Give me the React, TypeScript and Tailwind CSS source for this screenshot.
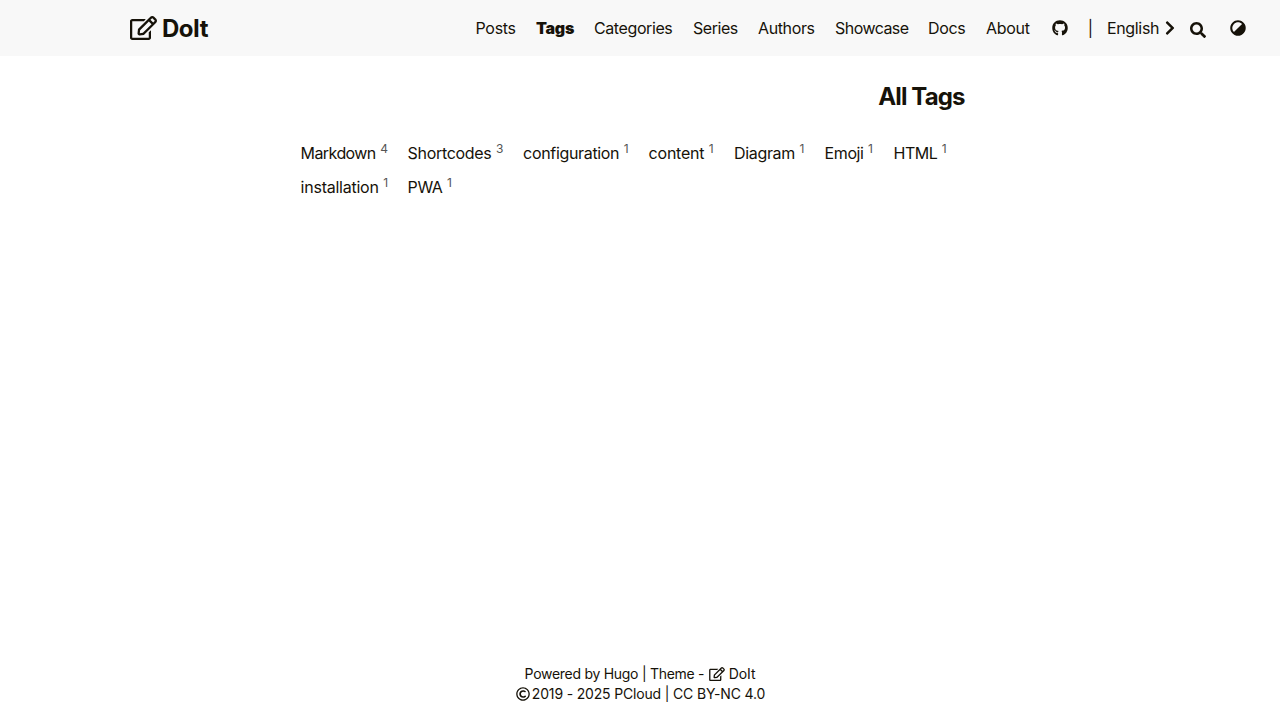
import React from "react";
import { FaAdjust, FaChevronRight, FaGithub, FaRegCopyright, FaRegEdit, FaSearch } from "react-icons/fa";

const links = [
  { label: "Posts", style: "w-[60.5px] tracking-[-0.3px]" },
  { label: "Tags", style: "w-[58px] font-black tracking-[-0.25px]" },
  { label: "Categories", style: "w-[99px] tracking-[-0.4px]" },
  { label: "Series", style: "w-[65px] tracking-[-0.45px]" },
  { label: "Authors", style: "w-[77px] tracking-[-0.37px]" },
  { label: "Showcase", style: "w-[93px] tracking-[-0.55px]" },
  { label: "Docs", style: "w-[58px] tracking-[-0.37px]" },
  { label: "About", style: "w-[66px] tracking-[-0.3px]" },
];

const tags = [
  { label: "Markdown", count: 4, style: "w-[107px] tracking-[-0.58px]" },
  { label: "Shortcodes", count: 3, style: "w-[115.5px] tracking-[-0.32px]" },
  { label: "configuration", count: 1, style: "w-[125.5px] tracking-[-0.33px]" },
  { label: "content", count: 1, style: "w-[85.5px] tracking-[-0.22px]" },
  { label: "Diagram", count: 1, style: "w-[90.5px] tracking-[-0.35px]" },
  { label: "Emoji", count: 1, style: "w-[69px] tracking-[-0.4px]" },
  { label: "HTML", count: 1, style: "w-[70px] tracking-[-0.5px]" },
  { label: "installation", count: 1, style: "w-[107px] tracking-[-0.24px]" },
  { label: "PWA", count: 1, style: "w-[60px] tracking-[-0.4px]" },
];

export default function App() {
  return (
    <div className="flex h-screen flex-col bg-white font-[Inter,sans-serif] text-base text-[#161209]">
      <header className="flex h-14 items-center justify-between bg-[#f8f8f8] pr-[34px] pl-[129.5px]">
        <a className="flex items-center text-2xl font-bold tracking-[-0.5px]">
          <FaRegEdit className="h-6 w-[27px]" />
          <span className="pt-px pl-[5.5px]">DoIt</span>
        </a>
        <nav className="flex items-center whitespace-nowrap">
          {links.map((link) => (
            <a key={link.label} className={link.style}>{link.label}</a>
          ))}
          <FaGithub className="size-4" />
          <span className="w-[39px] pl-[6px] text-center">|</span>
          <a className="flex w-[83px] items-center">
            <span className="w-[57px] tracking-[-0.35px]">English</span>
            <FaChevronRight className="h-4 w-3" />
          </a>
          <FaSearch className="mt-1 size-4" />
          <FaAdjust className="ml-6 size-4 rotate-[-135deg]" />
        </nav>
      </header>
      <main className="mx-auto w-[680px] flex-1 pt-[25px]">
        <h1 className="pr-[15.5px] text-right text-2xl font-bold tracking-[-0.9px]">All Tags</h1>
        <div className="flex flex-wrap pt-[23px] pl-[0.6px]">
          {tags.map((tag) => (
            <a key={tag.label} className={`h-[34px] whitespace-nowrap leading-[34px] ${tag.style}`}>
              {tag.label}
              <sup className="ml-[4.5px] text-xs tracking-normal text-[#555]">{tag.count}</sup>
            </a>
          ))}
        </div>
      </main>
      <footer className="pb-4 text-center text-sm">
        <div className="flex items-center justify-center tracking-[-0.28px]">
          Powered by Hugo | Theme -
          <FaRegEdit className="mr-1 ml-[4.5px] h-3.5 w-4" />
          <span className="tracking-[-0.1px]">DoIt</span>
        </div>
        <div className="flex items-center justify-center pl-[1.5px] tracking-[-0.17px]">
          <FaRegCopyright className="mr-[1.5px] size-3.5" />
          2019 - 2025 PCloud | CC BY-NC 4.0
        </div>
      </footer>
    </div>
  );
}
